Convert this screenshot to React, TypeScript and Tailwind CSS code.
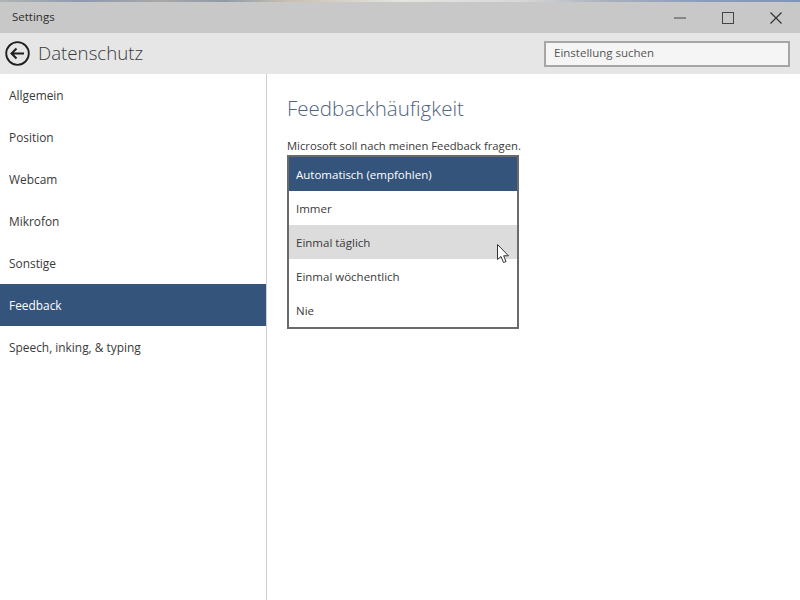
const font = { fontFamily: '"Open Sans", "Noto Sans", sans-serif' };

const navItems = ['Allgemein', 'Position', 'Webcam', 'Mikrofon', 'Sonstige', 'Feedback', 'Speech, inking, & typing'];
const options = ['Automatisch (empfohlen)', 'Immer', 'Einmal täglich', 'Einmal wöchentlich', 'Nie'];

export default function App() {
    return (
        <div className="w-[800px] h-[600px] bg-white flex flex-col overflow-hidden text-[#3a3a3a]" style={font}>
            {/* Wallpaper strip + title bar */}
            <div className="h-[2px] bg-[linear-gradient(90deg,#b0b4b4_0%,#8d9ab0_10%,#a8a8a8_20%,#8f9aa8_28%,#c8c0b0_36%,#e4e4e0_50%,#d8d8d8_65%,#a8b0bc_76%,#8a9cbc_88%,#7f96b8_100%)]" />
            <div className="h-[31px] bg-[#c8c8c8] flex items-center justify-between">
                <span className="pl-3 mb-[2px] text-[11.5px] text-[#2e2e2e]">Settings</span>
                <div className="flex items-center text-[#333]">
                    <div className="w-12 h-[31px] flex items-center justify-center">
                        <svg width="12" height="12" viewBox="0 0 12 12"><path d="M0 6h12" stroke="#444" strokeWidth="1" /></svg>
                    </div>
                    <div className="w-12 h-[31px] flex items-center justify-center">
                        <svg width="12" height="12" viewBox="0 0 12 12"><rect x="0.5" y="0.5" width="11" height="11" fill="none" stroke="#444" strokeWidth="1" /></svg>
                    </div>
                    <div className="w-12 h-[31px] flex items-center justify-center">
                        <svg width="12" height="12" viewBox="0 0 12 12"><path d="M0.5 0.5l11 11M11.5 0.5l-11 11" stroke="#333" strokeWidth="1.2" /></svg>
                    </div>
                </div>
            </div>

            {/* Header */}
            <div className="h-[41px] bg-[#e6e6e6] flex items-center justify-between pl-[5px] pr-[10px]">
                <div className="flex items-center gap-2">
                    <svg width="25" height="25" viewBox="0 0 25 25" fill="none" stroke="#1f1f1f">
                        <circle cx="12.5" cy="12.5" r="11.3" strokeWidth="1.8" />
                        <path d="M19 12.5H6.5M11.5 7.5l-5 5 5 5" strokeWidth="2" />
                    </svg>
                    <span className="text-[18.7px] text-[#3a3a3a] font-light">Datenschutz</span>
                </div>
                <div className="w-[246px] h-[26px] border-2 border-[#a6a6a6] bg-[#f5f5f5] flex items-center pl-2 pb-[2px] text-[11.5px] text-[#555]">
                    Einstellung suchen
                </div>
            </div>

            <div className="flex-1 flex">
                {/* Sidebar */}
                <nav className="w-[267px] border-r border-[#cfcfcf]">
                    {navItems.map((item) => (
                        <div
                            key={item}
                            className={`h-[42px] flex items-center pl-[9px] pt-[2px] text-[11.9px] ${item === 'Feedback' ? 'bg-[#34547c] text-white' : 'text-[#3a3a3a]'}`}
                        >
                            {item}
                        </div>
                    ))}
                </nav>

                {/* Content */}
                <main className="relative flex-1 pl-5 pt-[19px]">
                    <h1 className="text-[20.5px] leading-[30px] text-[#4f6480] font-light">Feedbackhäufigkeit</h1>
                    <p className="mt-[14px] text-[11.25px] leading-[18px] text-[#3a3a3a]">Microsoft soll nach meinen Feedback fragen.</p>
                    <div className="w-[232px] border-2 border-[#6a6a6a] bg-white">
                        {options.map((opt, i) => (
                            <div
                                key={opt}
                                className={`h-[34px] flex items-center pl-[7px] pt-[2px] text-[11.5px] ${i === 0 ? 'bg-[#34547c] text-white font-medium' : i === 2 ? 'bg-[#dcdcdc] text-[#3a3a3a]' : 'text-[#3a3a3a]'}`}
                            >
                                {opt}
                            </div>
                        ))}
                    </div>
                    {/* Mouse cursor */}
                    <svg className="absolute left-[230px] top-[170px]" width="14" height="20" viewBox="0 0 14 20">
                        <path d="M0.5 0.5V15.5L4 12.5L6.5 18.5L9 17.5L6.7 11.8H11.5Z" fill="#fff" stroke="#333" strokeWidth="1" />
                    </svg>
                </main>
            </div>
        </div>
    );
}
